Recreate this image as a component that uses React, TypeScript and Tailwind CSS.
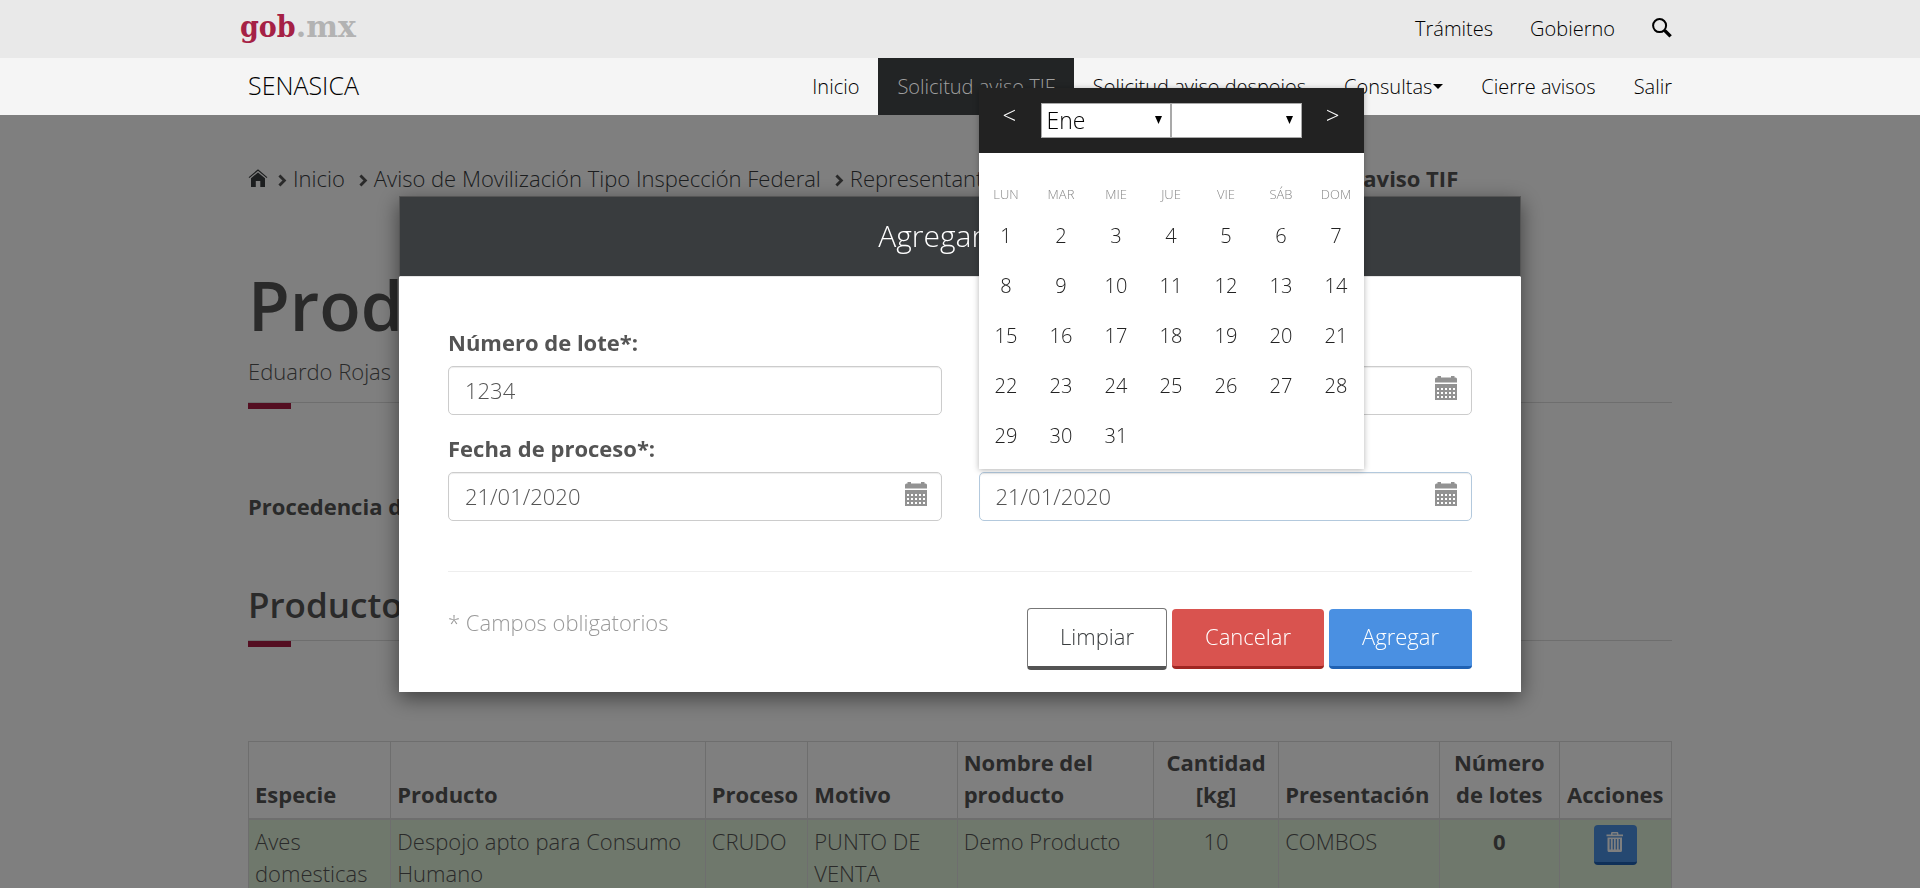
import React, { useState } from "react";

const navItems = [
  { label: "Inicio" },
  { label: "Solicitud aviso TIF", active: true },
  { label: "Solicitud aviso despojos" },
  { label: "Consultas", caret: true },
  { label: "Cierre avisos" },
  { label: "Salir" },
];

const months = ["Ene", "Feb", "Mar", "Abr", "May", "Jun", "Jul", "Ago", "Sep", "Oct", "Nov", "Dic"];
const weekDays = ["Lun", "Mar", "Mie", "Jue", "Vie", "Sáb", "Dom"];
const weeks = [0, 1, 2, 3, 4].map((w) =>
  [1, 2, 3, 4, 5, 6, 7].map((d) => w * 7 + d).map((d) => (d <= 31 ? d : null)),
);

function SearchIcon() {
  return (
    <svg viewBox="0 0 20 20" className="mb-0.5 size-5" fill="none" stroke="currentColor" aria-hidden="true">
      <circle cx="7.6" cy="7.6" r="6.5" strokeWidth="2" />
      <path d="M12.6 12.4 L18.6 18.4" strokeWidth="3.4" />
    </svg>
  );
}

function HomeIcon() {
  return (
    <svg viewBox="0 0 20 18" className="h-[18px] w-5" fill="none" aria-hidden="true">
      <path d="M1 8.6 L10 1 L19 8.6" stroke="currentColor" strokeWidth="1.2" />
      <path d="M10 3.4 L17 9.3 V18 H12.3 V12 H7.8 V18 H3 V9.3 Z" fill="currentColor" />
    </svg>
  );
}

function ChevronIcon() {
  return (
    <svg viewBox="0 0 9 13" className="mt-1 h-[13px] w-[9px]" fill="none" stroke="currentColor" strokeWidth="2.8" aria-hidden="true">
      <path d="M1.4 1.4 L6.4 6.5 L1.4 11.6" />
    </svg>
  );
}

function CalendarIcon() {
  return (
    <svg viewBox="0 0 22 24" className="h-6 w-[22px]" aria-hidden="true">
      <path d="M0 6.5 V3 Q0 1.5 1.5 1.5 H2.5 V0 H6 V1.5 H16 V0 H19.5 V1.5 H20.5 Q22 1.5 22 3 V6.5 Z" fill="#929292" />
      <path d="M0 8 H22 V24 H0 Z" fill="#929292" />
      {[12, 16, 20].map((y) =>
        [2, 6, 10, 14, 18].map((x) => (
          <rect key={`${x}-${y}`} x={x} y={y} width="2" height="2" fill="#fff" />
        )),
      )}
    </svg>
  );
}

function TrashIcon() {
  return (
    <svg viewBox="0 0 18 20" className="h-5 w-[18px]" aria-hidden="true">
      <path d="M5 2.5 V1.2 Q5 0 6.2 0 H11.2 Q12.4 0 12.4 1.2 V2.5 H17 V4.3 H0.5 V2.5 Z M6.5 2.5 H11 V1.5 H6.5 Z" fill="#fff" fillRule="evenodd" />
      <path d="M1.5 5.5 H16 V18.5 Q16 20 14.5 20 H3 Q1.5 20 1.5 18.5 Z M3.6 7 V17.5 H4.8 V7 Z M6.7 7 V17.5 H7.9 V7 Z M9.7 7 V17.5 H10.9 V7 Z M12.7 7 V17.5 H13.9 V7 Z" fill="#fff" fillRule="evenodd" />
    </svg>
  );
}

function TopBar() {
  return (
    <header className="relative z-20 text-xl text-black">
      <div className="bg-[#e9e9e9]">
        <div className="mx-auto flex h-[58px] max-w-[1440px] items-center justify-between pr-2">
          <a href="#" className="pb-1 font-['DejaVu_Serif_Condensed','DejaVu_Serif',serif] text-[30px] leading-none font-bold text-[#b3b3b3]">
            <span className="text-[#a52145]">gob</span>
            <span className="font-['DejaVu_Serif',serif]">.mx</span>
          </a>
          <nav className="flex items-center gap-[37px]">
            <a href="#">Trámites</a>
            <a href="#">Gobierno</a>
            <button type="button" aria-label="Buscar"><SearchIcon /></button>
          </nav>
        </div>
      </div>
      <div className="bg-[#f5f5f5]">
        <div className="mx-auto flex h-[57px] max-w-[1424px] items-center justify-between">
          <a href="#" className="pb-0.5 text-[25px]">SENASICA</a>
          <nav className="-mr-[19px] flex self-stretch">
            {navItems.map((item) => (
              <a
                key={item.label}
                href="#"
                className={item.active ? "flex items-center bg-[#222425] px-[19px] text-[#a0a0a0]" : "flex items-center px-[19px]"}
              >
                {item.label}
                {item.caret && (
                  <svg viewBox="0 0 10 5" className="ml-px h-[5px] w-2.5" aria-hidden="true"><path d="M0 0 H10 L5 5 Z" fill="#000" /></svg>
                )}
              </a>
            ))}
          </nav>
        </div>
      </div>
    </header>
  );
}

function SectionRule() {
  return (
    <div className="border-t border-[#ddd]">
      <div className="h-1.5 w-[43px] bg-[#a81c42]" />
    </div>
  );
}

function ProductTable() {
  const th = "border border-b-2 border-[#ddd] px-1.5 pt-1 pb-2 align-bottom font-bold";
  const td = "border border-[#ddd] px-1.5 pt-[5px] pb-[7px] align-top";
  return (
    <table className="mt-[94px] w-full table-fixed border-collapse text-left">
      <colgroup>
        <col className="w-[10%]" />
        <col className="w-[22.1%]" />
        <col className="w-[7.2%]" />
        <col className="w-[10.5%]" />
        <col className="w-[13.8%]" />
        <col className="w-[8.8%]" />
        <col className="w-[11.3%]" />
        <col className="w-[8.4%]" />
        <col className="w-[7.9%]" />
      </colgroup>
      <thead>
        <tr>
          <th className={th}>Especie</th>
          <th className={th}>Producto</th>
          <th className={th}>Proceso</th>
          <th className={th}>Motivo</th>
          <th className={th}>Nombre del<br />producto</th>
          <th className={`${th} text-center`}>Cantidad<br />[kg]</th>
          <th className={th}>Presentación</th>
          <th className={`${th} text-center`}>Número<br />de lotes</th>
          <th className={`${th} text-center`}>Acciones</th>
        </tr>
      </thead>
      <tbody className="bg-[#dff0d8]">
        <tr>
          <td className={td}>Aves domesticas</td>
          <td className={td}>Despojo apto para Consumo Humano</td>
          <td className={td}>CRUDO</td>
          <td className={td}>PUNTO DE VENTA</td>
          <td className={td}>Demo Producto</td>
          <td className={`${td} text-center`}>10</td>
          <td className={td}>COMBOS</td>
          <td className={`${td} text-center font-bold`}>0</td>
          <td className={`${td} text-center`}>
            <button type="button" aria-label="Eliminar" className="inline-flex h-10 w-[43px] justify-center rounded border-b-3 border-[#1f61b3] bg-[#4a90e2] pt-[7px]">
              <TrashIcon />
            </button>
          </td>
        </tr>
      </tbody>
    </table>
  );
}

function PageContent() {
  return (
    <main className="mx-auto max-w-[1424px] pt-[47px]">
      <nav className="flex items-center whitespace-nowrap">
        <a href="#" aria-label="Portada" className="mr-2.5 text-[#393c3e]"><HomeIcon /></a>
        {["Inicio", "Aviso de Movilización Tipo Inspección Federal", "Representante legal de la planta TIF"].map((label) => (
          <span key={label} className="mr-3.5 flex items-center gap-1.5">
            <ChevronIcon />
            <a href="#" className="text-[#393c3e]">{label}</a>
          </span>
        ))}
        <span className="flex items-center gap-1.5">
          <ChevronIcon />
          <b className="font-bold">Solicitud de aviso TIF</b>
        </span>
      </nav>
      <h1 className="mt-[73px] text-[68px] leading-[76px] font-semibold">Productos</h1>
      <p className="mt-3 mb-[15px]">Eduardo Rojas</p>
      <SectionRule />
      <p className="mt-[81px] font-bold">Procedencia de los productos:</p>
      <h2 className="mt-[63px] mb-[15px] text-[35px] leading-[40px] font-semibold">Productos agregados</h2>
      <SectionRule />
      <ProductTable />
    </main>
  );
}

function DatePicker() {
  const select = "h-[35px] w-full appearance-none border border-[#a9a9a9] bg-white pl-[5px] text-[23px] leading-none text-black outline-none";
  const arrow = "pointer-events-none absolute top-[13px] right-[9px] h-2 w-[7px]";
  return (
    <div className="absolute bottom-[calc(100%+3px)] left-0 z-10 w-[385px] bg-white shadow-[0_1px_6px_rgba(0,0,0,0.3)]">
      <div className="flex h-[65px] items-start justify-between bg-[#222] px-6 pt-[15px] text-white">
        <button type="button" aria-label="Mes anterior" className="-mt-1 text-2xl">&lt;</button>
        <div className="flex">
          <div className="relative w-[130px]">
            <select aria-label="Mes" className={select}>
              {months.map((m) => <option key={m}>{m}</option>)}
            </select>
            <svg viewBox="0 0 7 8" className={arrow} aria-hidden="true"><path d="M0 0 H7 L3.5 8 Z" fill="#000" /></svg>
          </div>
          <div className="relative w-[131px]">
            <select aria-label="Año" className={select} defaultValue="">
              <option value=""></option>
            </select>
            <svg viewBox="0 0 7 8" className={arrow} aria-hidden="true"><path d="M0 0 H7 L3.5 8 Z" fill="#000" /></svg>
          </div>
        </div>
        <button type="button" aria-label="Mes siguiente" className="-mt-1 text-2xl">&gt;</button>
      </div>
      <table className="mt-4 mb-2 w-full table-fixed text-center text-xl text-[#222]">
        <thead>
          <tr className="h-[42px] text-[13px] text-[#888] uppercase">
            {weekDays.map((d) => <th key={d} className="p-0 pt-2 text-center font-light">{d}</th>)}
          </tr>
        </thead>
        <tbody>
          {weeks.map((week, i) => (
            <tr key={i} className="h-[50px]">
              {week.map((d, j) => (
                <td key={j} className="p-0">{d && <button type="button" className="size-full">{d}</button>}</td>
              ))}
            </tr>
          ))}
        </tbody>
      </table>
    </div>
  );
}

type FieldProps = {
  id: string;
  label: string;
  initial: string;
  calendar?: boolean;
  focused?: boolean;
  children?: React.ReactNode;
};

function Field({ id, label, initial, calendar, focused, children }: FieldProps) {
  const [value, setValue] = useState(initial);
  return (
    <div>
      <label htmlFor={id} className="mb-2 block font-bold">{label}</label>
      <div className="relative">
        <input
          id={id}
          value={value}
          onChange={(e) => setValue(e.target.value)}
          className={
            focused
              ? "h-[49px] w-full rounded-[5px] border border-[#b3c9dd] bg-white px-4 pb-0.5 shadow-[inset_0_1px_1px_rgba(0,0,0,0.075)] outline-none"
              : "h-[49px] w-full rounded-[5px] border border-[#ccc] bg-white px-4 pb-0.5 shadow-[inset_0_1px_1px_rgba(0,0,0,0.075)] outline-none"
          }
        />
        {calendar && (
          <button type="button" aria-label={`Calendario ${label}`} className="absolute top-2.5 right-[15px]"><CalendarIcon /></button>
        )}
        {children}
      </div>
    </div>
  );
}

function LotModal() {
  const button = "h-[60px] rounded border-b-3 px-[33px] pb-1 text-white";
  return (
    <div className="fixed inset-x-0 top-[196px] z-30 px-4">
      <div role="dialog" aria-label="Agregar lote" className="mx-auto max-w-[1122px] bg-white shadow-[0_6px_20px_rgba(0,0,0,0.5)]">
        <h2 className="flex h-[81px] items-center justify-center border border-[#555] border-b-[#e5e5e5] bg-[#393c3e] pb-0.5 text-[30px] text-white">Agregar lote</h2>
        <form className="px-[49px] pt-[49px] pb-[22px]" onSubmit={(e) => e.preventDefault()}>
          <div className="grid grid-cols-2 gap-x-[37px] gap-y-[17px] border-b border-[#eee] pb-[50px]">
            <Field id="lote" label="Número de lote*:" initial="1234" />
            <Field id="caducidad" label="Fecha de caducidad*:" initial="" calendar />
            <Field id="proceso" label="Fecha de proceso*:" initial="21/01/2020" calendar />
            <Field id="empaque" label="Fecha de empaque*:" initial="21/01/2020" calendar focused>
              <DatePicker />
            </Field>
          </div>
          <div className="flex items-start justify-between pt-9">
            <p className="leading-7 text-[#999]">* Campos obligatorios</p>
            <div className="flex items-center gap-[5px]">
              <button type="reset" className="h-[62px] rounded border border-b-4 border-[#545454] border-x-[#777] border-t-[#777] bg-white px-8 pb-1 text-[#393c3e]">Limpiar</button>
              <button type="button" className={`${button} border-[#a02622] bg-[#d9534f]`}>Cancelar</button>
              <button type="submit" className={`${button} border-[#1f61b3] bg-[#4a90e2]`}>Agregar</button>
            </div>
          </div>
        </form>
      </div>
    </div>
  );
}

export default function App() {
  return (
    <div className="h-screen overflow-hidden bg-white font-['Open_Sans',sans-serif] text-[22px] leading-8 font-light text-[#545454]">
      <TopBar />
      <PageContent />
      <div className="fixed inset-0 z-10 bg-black/50" />
      <LotModal />
    </div>
  );
}
